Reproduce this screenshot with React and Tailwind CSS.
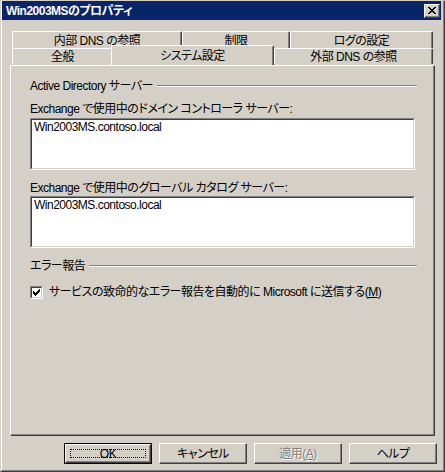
import React from "react";

const F = "font-['Liberation_Sans','Noto_Sans_CJK_JP',sans-serif] [font-feature-settings:'palt'] tracking-[-0.5px]";

function Tab({ label, className = "", selected = false, top = false }) {
  return (
    <div
      className={
        "flex items-center justify-center bg-[#d4d0c8] border-t border-l border-white border-r border-r-[#404040] shadow-[inset_-1px_0_0_#808080] rounded-tl-[2px] rounded-tr-[2px] text-[12px] leading-[14px] text-black whitespace-nowrap " +
        (selected
          ? "relative z-10 -mt-[3px] h-[20px] "
          : top
          ? "h-[17px] pt-[1px] "
          : "h-[16px] pt-[1px] ") +
        className
      }
    >
      {label}
    </div>
  );
}

function TextBox({ value }) {
  return (
    <div className="w-[385px] h-[52px] border-t border-l border-[#808080] border-r border-b border-r-white border-b-white">
      <div className="w-full h-full bg-white border-t border-l border-[#404040] border-r border-b border-r-[#d4d0c8] border-b-[#d4d0c8] pl-[2px] pt-[0px] text-[12px] leading-[14px] text-black">
        {value}
      </div>
    </div>
  );
}

function GroupLabel({ children }) {
  return (
    <div className="flex items-center gap-[4px] h-[14px]">
      <span className="text-[12px] leading-[14px] whitespace-nowrap">{children}</span>
      <div className="flex-1 h-[2px] border-t border-[#808080] border-b border-b-white" />
    </div>
  );
}

function Button({ children, isDefault = false, disabled = false }) {
  const inner = (
    <div className="w-full h-full bg-[#d4d0c8] border-t border-l border-white border-r border-b border-r-[#404040] border-b-[#404040] shadow-[inset_-1px_-1px_0_#808080] flex items-center justify-center">
      {isDefault ? (
        <div className="w-[calc(100%-8px)] h-[calc(100%-8px)] border border-dotted border-black flex items-center justify-center text-[12px] leading-[14px]">
          {children}
        </div>
      ) : (
        <span
          className={
            "text-[12px] leading-[14px] " +
            (disabled ? "text-[#808080] [text-shadow:1px_1px_0_#ffffff]" : "text-black")
          }
        >
          {children}
        </span>
      )}
    </div>
  );
  return (
    <div className={"w-[88px] h-[21px] " + (isDefault ? "border border-black" : "")}>
      {inner}
    </div>
  );
}

export default function App() {
  return (
    <div
      className={
        "w-[445px] h-[472px] bg-[#d4d0c8] flex flex-col border-t border-l border-[#d4d0c8] border-r border-b border-r-[#404040] border-b-[#404040] text-black " +
        F
      }
    >
      <div className="flex-1 flex flex-col border-l border-white border-r border-b border-r-[#808080] border-b-[#808080]">
        {/* Title bar */}
        <div className="h-[19px] mr-[2px] bg-[#0a246a] flex items-center justify-between pl-[4px] pr-[1px]">
          <span className="text-white font-bold text-[12px] leading-[14px] tracking-[-0.5px]">
            Win2003MSのプロパティ
          </span>
          <div className="w-[16px] h-[14px] bg-[#d4d0c8] border-t border-l border-white border-r border-b border-r-[#404040] border-b-[#404040] shadow-[inset_-1px_-1px_0_#808080] flex items-center justify-center">
            <svg width="8" height="7" viewBox="0 0 8 7">
              <path
                d="M0 0h2v1h1v1h2V1h1V0h2v1H7v1H6v1H5v1h1v1h1v1h1v1H6V6H5V5H3v1H2v1H0V6h1V5h1V4h1V3H2V2H1V1H0z"
                fill="#000"
              />
            </svg>
          </div>
        </div>

        {/* Tabs + panel */}
        <div className="ml-[8px] mt-[11px] w-[425px] flex flex-col">
          <div className="flex pl-[2px]">
            <Tab top label="内部 DNS の参照" className="w-[170px]" />
            <Tab top label="制限" className="w-[108px]" />
            <Tab top label="ログの設定" className="w-[143px]" />
          </div>
          <div className="flex items-start pl-[2px]">
            <Tab label="全般" className="w-[101px]" />
            <Tab label="システム設定" selected className="w-[163px] -ml-[2px]" />
            <Tab label="外部 DNS の参照" className="w-[159px]" />
          </div>
          <div className="h-[371px] border-t border-l border-white border-r border-b border-r-[#404040] border-b-[#404040] shadow-[inset_-1px_-1px_0_#808080] pl-[19px] pr-[17px] flex flex-col">
            <div className="mt-[13px]">
              <GroupLabel>Active Directory サーバー</GroupLabel>
            </div>
            <div className="mt-[9px] text-[12px] leading-[14px]">
              Exchange で使用中のドメイン コントローラ サーバー:
            </div>
            <div className="mt-[2px]">
              <TextBox value="Win2003MS.contoso.local" />
            </div>
            <div className="mt-[11px] text-[12px] leading-[14px]">
              Exchange で使用中のグローバル カタログ サーバー:
            </div>
            <div className="mt-[1px]">
              <TextBox value="Win2003MS.contoso.local" />
            </div>
            <div className="mt-[11px]">
              <GroupLabel>エラー報告</GroupLabel>
            </div>
            <div className="mt-[12px] flex items-center gap-[6px] h-[14px]">
              <div className="w-[13px] h-[13px] border-t border-l border-[#808080] border-r border-b border-r-white border-b-white">
                <div className="w-full h-full bg-white border-t border-l border-[#404040] border-r border-b border-r-[#d4d0c8] border-b-[#d4d0c8] flex items-center justify-center">
                  <svg width="7" height="7" viewBox="0 0 7 7">
                    <path d="M0 2h1v1h1v1h1V3h1V2h1V1h1V0h1v3H6v1H5v1H4v1H3v1H2V6H1V5H0z" fill="#000" />
                  </svg>
                </div>
              </div>
              <span className="text-[12px] leading-[14px] whitespace-nowrap">
                サービスの致命的なエラー報告を自動的に Microsoft に送信する(<span className="underline">M</span>)
              </span>
            </div>
          </div>
        </div>

        {/* Buttons */}
        <div className="mt-[7px] pl-[62px] flex gap-[7px]">
          <Button isDefault>OK</Button>
          <Button>キャンセル</Button>
          <Button disabled>
            適用(<span className="underline">A</span>)
          </Button>
          <Button>ヘルプ</Button>
        </div>
      </div>
    </div>
  );
}
